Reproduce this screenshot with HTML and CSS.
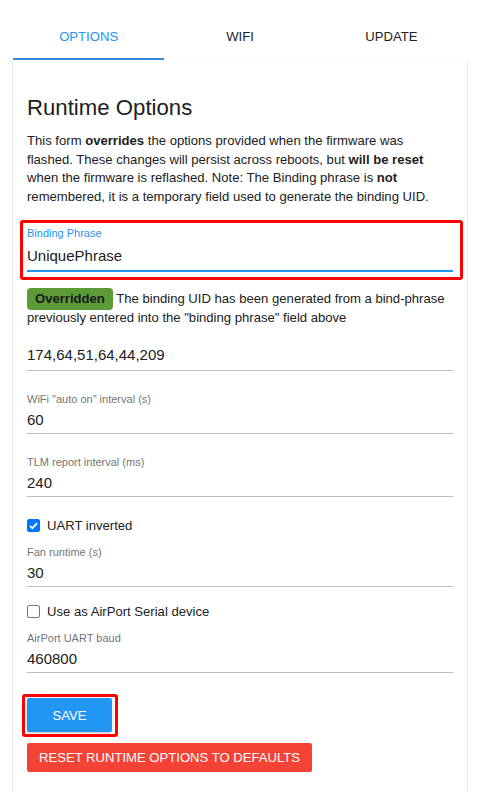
FILE: index.html
```html
<!DOCTYPE html>
<html>
<head>
<meta charset="utf-8">
<link rel="stylesheet" href="styles.css">
</head>
<body>
<div class="page">
  <nav class="tabs">
    <div class="tab active">OPTIONS</div>
    <div class="tab">WIFI</div>
    <div class="tab">UPDATE</div>
  </nav>
  <section class="card">
    <h2 class="title">Runtime Options</h2>
    <p class="intro">This form <b>overrides</b> the options provided when the firmware was flashed. These changes will persist across reboots, but <b>will be reset</b> when the firmware is reflashed. Note: The Binding phrase is <b>not</b> remembered, it is a temporary field used to generate the binding UID.</p>

    <div class="highlight">
      <div class="field focused">
        <div class="label">Binding Phrase</div>
        <div class="value">UniquePhrase</div>
      </div>
    </div>

    <p class="note"><span class="badge">Overridden</span> The binding UID has been generated from a bind-phrase previously entered into the "binding phrase" field above</p>

    <div class="field first">
      <div class="value">174,64,51,64,44,209</div>
    </div>
    <div class="field">
      <div class="label">WiFi "auto on" interval (s)</div>
      <div class="value">60</div>
    </div>
    <div class="field">
      <div class="label">TLM report interval (ms)</div>
      <div class="value">240</div>
    </div>
    <div class="check">
      <span class="box checked"><svg viewBox="0 0 13 13" width="13" height="13"><path d="M3 6.8 L5.4 9.2 L10 4.2" fill="none" stroke="#fff" stroke-width="1.8"/></svg></span>
      <span>UART inverted</span>
    </div>
    <div class="field after-check">
      <div class="label">Fan runtime (s)</div>
      <div class="value">30</div>
    </div>
    <div class="check second">
      <span class="box"></span>
      <span>Use as AirPort Serial device</span>
    </div>
    <div class="field after-check">
      <div class="label">AirPort UART baud</div>
      <div class="value">460800</div>
    </div>

    <div class="actions">
      <div class="save-ring"><button class="btn save">SAVE</button></div>
      <button class="btn reset">RESET RUNTIME OPTIONS TO DEFAULTS</button>
    </div>
  </section>
</div>
</body>
</html>
```

FILE: styles.css
```css
* { box-sizing: border-box; }
body {
  margin: 0;
  background: #fff;
  font-family: "Liberation Sans", Arial, sans-serif;
  color: #212121;
}
.page {
  padding: 12px 14px 0 13px;
}
.tabs {
  display: grid;
  grid-template-columns: 1fr 1fr 1fr;
  height: 48px;
}
.tab {
  display: flex;
  align-items: center;
  justify-content: center;
  font-size: 13.1px;
  color: #212121;
  border-bottom: 2px solid transparent;
  padding-top: 2px;
}
.tab.active {
  color: #2196f3;
  border-bottom-color: #2f8be0;
}
.card {
  background: #fff;
  box-shadow: 0 1px 2px rgba(0,0,0,0.18), 0 0 1px rgba(0,0,0,0.10);
  padding: 34px 14px 20px 14px;
}
.title {
  margin: 0;
  font-size: 22.2px;
  font-weight: 400;
  line-height: 28px;
}
.intro {
  margin: 10px 0 0 0;
  padding-right: 4px;
  font-size: 13.1px;
  line-height: 18.6px;
}
.highlight {
  margin: 14px -10px 0 -7px;
  border: 3px solid #f00;
  border-radius: 3px;
  padding: 3px 7px 5px 4px;
}
.field {
  padding-top: 21px;
  border-bottom: 1px solid #bdbdbd;
  padding-bottom: 3px;
}
.field.focused {
  padding-top: 0;
  border-bottom: 2px solid #2196f3;
  padding-bottom: 4px;
}
.label {
  font-size: 11px;
  line-height: 15px;
  color: #757575;
}
.focused .label { color: #2196f3; }
.value {
  margin-top: 3px;
  font-size: 15px;
  line-height: 20px;
  color: #212121;
}
.focused .value { margin-top: 5px; }
.note {
  margin: 9px 0 0 0;
  font-size: 13.1px;
  line-height: 19px;
}
.badge {
  background: #5c9b36;
  color: #1a1a1a;
  font-weight: 700;
  border-radius: 4px;
  padding: 3px 8px 4px 8px;
}
.field.first { padding-top: 18px; padding-bottom: 5px; }
.field.first .value { margin-top: 0; }
.check {
  display: flex;
  align-items: center;
  gap: 7px;
  font-size: 13.1px;
  margin-top: 20px;
  height: 16px;
}
.check.second { margin-top: 16px; }
.box {
  width: 13px;
  height: 13px;
  border: 1px solid #767676;
  border-radius: 2px;
  display: inline-flex;
  flex: none;
  background: #fff;
}
.box.checked {
  background: #0075ff;
  border-color: #0075ff;
}
.box svg { margin: -1px; }
.field.after-check { padding-top: 12px; }
.actions {
  margin-top: 21px;
  display: flex;
  flex-direction: column;
  align-items: flex-start;
  gap: 6px;
}
.save-ring {
  margin-left: -5px;
  border: 3px solid #f00;
  border-radius: 3px;
  padding: 1px 3px 2px 2px;
  display: flex;
}
.btn {
  border: 0;
  font-family: "Liberation Sans", Arial, sans-serif;
  font-size: 13.1px;
  color: #fff;
  border-radius: 2px;
  cursor: pointer;
}
.save {
  background: #2196f3;
  width: 85px;
  height: 34px;
  box-shadow: 0 1px 2px rgba(0,0,0,0.25);
}
.reset {
  background: #f44336;
  height: 29px;
  width: 285px;
  padding: 0;
}
```
